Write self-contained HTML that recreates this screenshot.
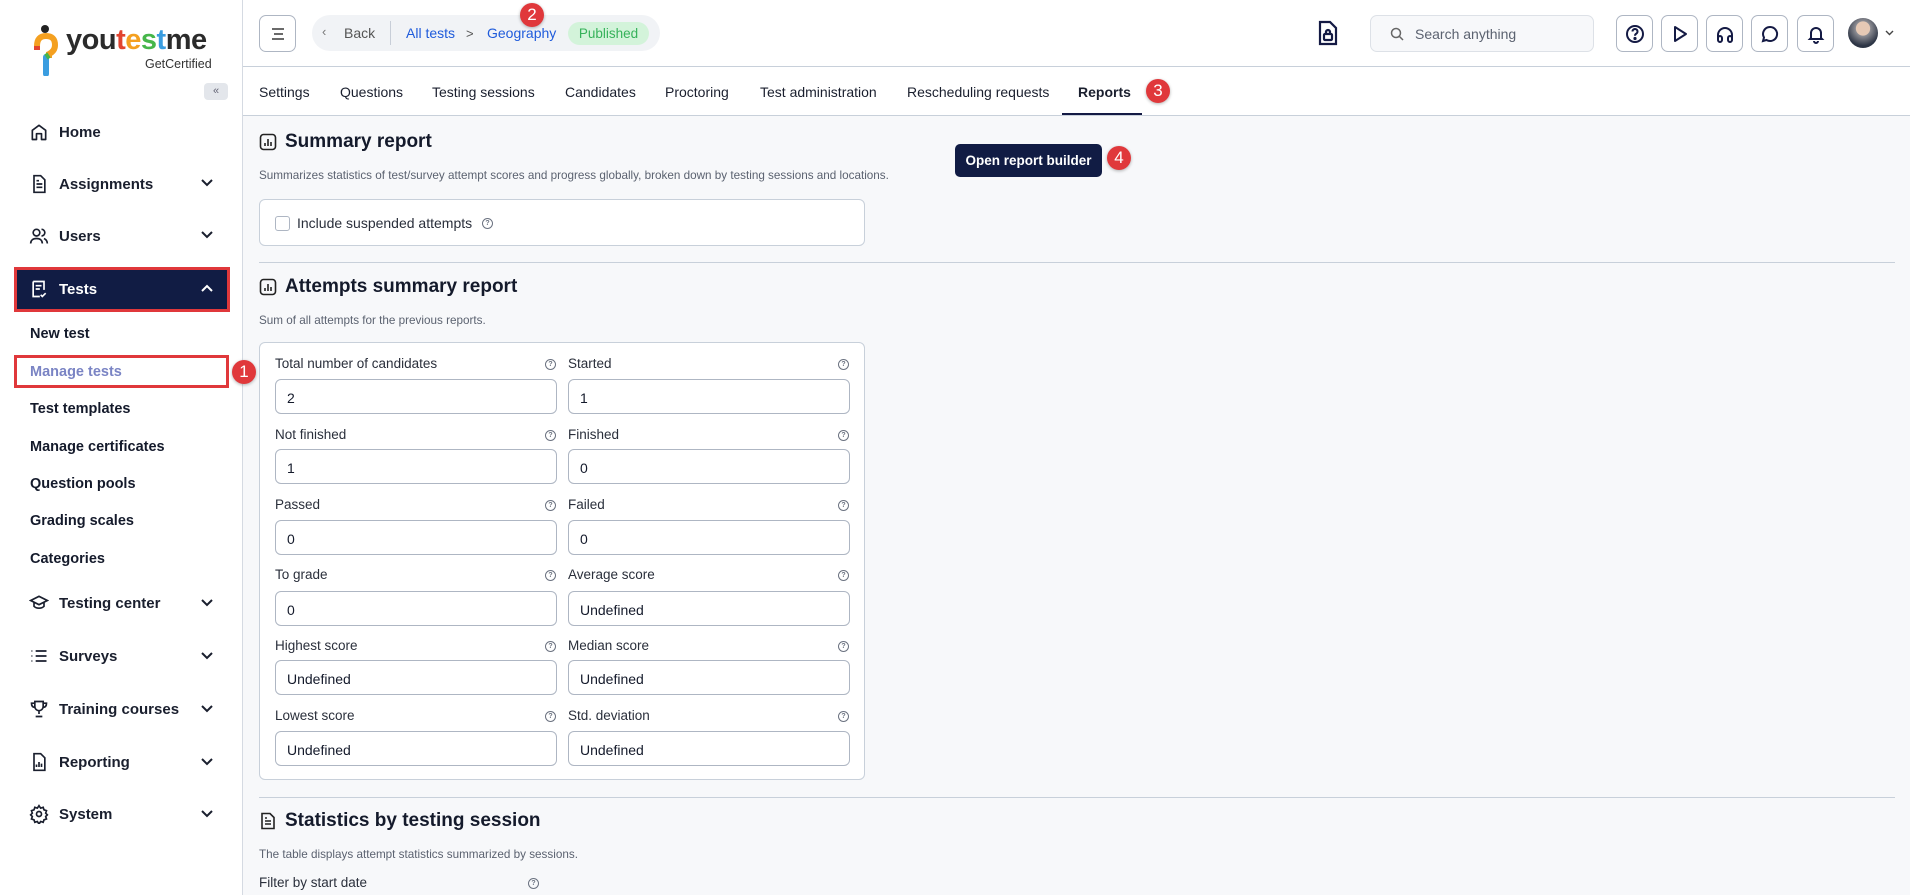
<!DOCTYPE html>
<html><head><meta charset="utf-8"><style>
*{box-sizing:border-box;margin:0;padding:0}
body{width:1910px;height:895px;overflow:hidden;font-family:"Liberation Sans",sans-serif;background:#f7f8fa;color:#141a2b;position:relative}
.a{position:absolute}
.sb{left:0;top:0;width:243px;height:895px;background:#fff;border-right:1px solid #d5dae2}
.nav{position:absolute;left:29px;font-size:15px;font-weight:bold;color:#1a1f2e;display:flex;align-items:center;height:24px}
.nav svg{margin-right:10px}
.chev{position:absolute;left:200px}
.sub{position:absolute;left:30px;font-size:14.5px;color:#141a2b;font-weight:bold}
.badge{position:absolute;width:24px;height:24px;border-radius:50%;background:#e0383b;color:#fff;font-size:17px;text-align:center;line-height:24px;box-shadow:0 1px 3px rgba(0,0,0,.3)}
.top{left:243px;top:0;width:1667px;height:67px;background:#fff;border-bottom:1px solid #c8d0da}
.tabs{left:243px;top:67px;width:1667px;height:49px;background:#fff;border-bottom:1px solid #c8d0da}
.tab{position:absolute;top:84px;font-size:14px;color:#1a1f2e}
.ib{position:absolute;top:15px;width:37px;height:37px;border:1px solid #aeb6c3;border-radius:7px;display:flex;align-items:center;justify-content:center;background:#fff}
h2{position:absolute;font-size:19px;font-weight:bold;color:#141a2b}
.desc{position:absolute;font-size:11.7px;color:#5b6270}
.box{position:absolute;background:#fff;border:1px solid #c8d0da;border-radius:6px}
.lbl{position:absolute;font-size:13.5px;color:#2a2f3b}
.inp{position:absolute;height:35px;border:1px solid #aeb6c3;border-radius:6px;background:#fff;font-size:14px;padding:10px 0 0 11px;color:#141a2b}
.hq{position:absolute;width:11px;height:11px;border:1px solid #6b7280;border-radius:50%;font-size:7px;text-align:center;line-height:9px;color:#6b7280;font-weight:bold}
.hr{position:absolute;left:259px;width:1636px;height:1px;background:#c8d0da}
</style></head><body>
<div class="a sb"></div>
<svg class="a" style="left:33px;top:24px" width="26" height="52" viewBox="0 0 26 52"><circle cx="12" cy="5" r="4" fill="#222"/><path d="M4 22 Q4 12 13 12 Q22 12 22 21 Q22 27 16 30 L16 34" stroke="#f4a020" stroke-width="6" fill="none"/><path d="M4 22 L4 26" stroke="#e2442f" stroke-width="6"/><path d="M13 33 L13 50" stroke="#3a9de0" stroke-width="6" stroke-linecap="round"/><path d="M13 33 L16 31" stroke="#46b64a" stroke-width="6"/></svg>
<div class="a" style="left:66px;top:24px;font-size:29px;font-weight:bold;letter-spacing:-0.5px;color:#2b2b2b">you<span style="color:#e2442f">t</span><span style="color:#f4a020">e</span><span style="color:#46b64a">s</span><span style="color:#3a9de0">t</span>me</div>
<div class="a" style="left:145px;top:57px;font-size:12.5px;color:#333">GetCertified</div>
<div class="a" style="left:204px;top:83px;width:24px;height:17px;background:#e3e6eb;border-radius:4px;font-size:11px;color:#667;text-align:center;line-height:16px">«</div>

<div class="nav" style="top:120px"><svg width="20" height="20" viewBox="0 0 24 24" fill="none" stroke="#1a1f2e" stroke-width="2"><path d="M4 21V10l8-6 8 6v11h-5v-7H9v7z" stroke-linejoin="round"/></svg>Home</div>
<div class="nav" style="top:172px"><svg width="20" height="20" viewBox="0 0 24 24" fill="none" stroke="#1a1f2e" stroke-width="2"><path d="M6 2h8l5 5v15H6z M9 12h7M9 16h7M9 8h3"/></svg>Assignments</div>
<div class="nav" style="top:224px"><svg width="20" height="20" viewBox="0 0 24 24" fill="none" stroke="#1a1f2e" stroke-width="2"><circle cx="9" cy="8" r="4"/><path d="M2 21c0-4 3-6 7-6s7 2 7 6M15 4a4 4 0 010 8M18 15c2 1 4 3 4 6"/></svg>Users</div>
<svg class="chev a" style="top:178px" width="14" height="10" viewBox="0 0 14 10"><path d="M2 2l5 5 5-5" stroke="#1a1f2e" stroke-width="2" fill="none"/></svg>
<svg class="chev a" style="top:230px" width="14" height="10" viewBox="0 0 14 10"><path d="M2 2l5 5 5-5" stroke="#1a1f2e" stroke-width="2" fill="none"/></svg>

<div class="a" style="left:14px;top:267px;width:216px;height:45px;background:#111c44;border:3px solid #e0383b"></div>
<div class="nav" style="top:277px;color:#fff"><svg width="20" height="20" viewBox="0 0 24 24" fill="none" stroke="#fff" stroke-width="2"><path d="M5 3h13v10M5 3v18h8M8 8h7M8 12h5M14 19l2 2 4-4"/></svg>Tests</div>
<svg class="chev a" style="top:283px" width="14" height="10" viewBox="0 0 14 10"><path d="M2 8l5-5 5 5" stroke="#fff" stroke-width="2" fill="none"/></svg>

<div class="sub" style="top:326px">New test</div>
<div class="a" style="left:14px;top:355px;width:215px;height:33px;border:3px solid #e0383b;background:#fff"></div>
<div class="sub" style="top:364px;color:#7a84c4">Manage tests</div>
<div class="badge" style="left:232px;top:360px">1</div>
<div class="sub" style="top:401px">Test templates</div>
<div class="sub" style="top:439px">Manage certificates</div>
<div class="sub" style="top:476px">Question pools</div>
<div class="sub" style="top:513px">Grading scales</div>
<div class="sub" style="top:551px">Categories</div>

<div class="nav" style="top:591px"><svg width="20" height="20" viewBox="0 0 24 24" fill="none" stroke="#1a1f2e" stroke-width="2"><path d="M2 9l10-5 10 5-10 5z M6 11v5c3 3 9 3 12 0v-5"/></svg>Testing center</div>
<div class="nav" style="top:644px"><svg width="20" height="20" viewBox="0 0 24 24" fill="none" stroke="#1a1f2e" stroke-width="2.2"><path d="M3 6h1M3 12h1M3 18h1M8 6h13M8 12h13M8 18h13"/></svg>Surveys</div>
<div class="nav" style="top:697px"><svg width="20" height="20" viewBox="0 0 24 24" fill="none" stroke="#1a1f2e" stroke-width="2"><path d="M7 3h10v6a5 5 0 01-10 0z M7 5H3c0 4 2 5 4 5M17 5h4c0 4-2 5-4 5M12 14v4M8 21h8"/></svg>Training courses</div>
<div class="nav" style="top:750px"><svg width="20" height="20" viewBox="0 0 24 24" fill="none" stroke="#1a1f2e" stroke-width="2"><path d="M6 2h8l5 5v15H6z M9 18v-3M12 18v-6M15 18v-4"/></svg>Reporting</div>
<div class="nav" style="top:802px"><svg width="20" height="20" viewBox="0 0 24 24" fill="none" stroke="#1a1f2e" stroke-width="2"><circle cx="12" cy="12" r="3"/><path d="M12 2l2 3 3-1 1 3 3 1-1 3 2 2-2 2 1 3-3 1-1 3-3-1-2 3-2-3-3 1-1-3-3-1 1-3-2-2 2-2-1-3 3-1 1-3 3 1z"/></svg>System</div>
<svg class="chev a" style="top:598px" width="14" height="10" viewBox="0 0 14 10"><path d="M2 2l5 5 5-5" stroke="#1a1f2e" stroke-width="2" fill="none"/></svg>
<svg class="chev a" style="top:651px" width="14" height="10" viewBox="0 0 14 10"><path d="M2 2l5 5 5-5" stroke="#1a1f2e" stroke-width="2" fill="none"/></svg>
<svg class="chev a" style="top:704px" width="14" height="10" viewBox="0 0 14 10"><path d="M2 2l5 5 5-5" stroke="#1a1f2e" stroke-width="2" fill="none"/></svg>
<svg class="chev a" style="top:757px" width="14" height="10" viewBox="0 0 14 10"><path d="M2 2l5 5 5-5" stroke="#1a1f2e" stroke-width="2" fill="none"/></svg>
<svg class="chev a" style="top:809px" width="14" height="10" viewBox="0 0 14 10"><path d="M2 2l5 5 5-5" stroke="#1a1f2e" stroke-width="2" fill="none"/></svg>

<div class="a top"></div>
<div class="a" style="left:259px;top:15px;width:37px;height:37px;border:1px solid #aeb6c3;border-radius:7px;background:#fff"><svg style="margin:10px 0 0 10px" width="16" height="16" viewBox="0 0 16 16"><path d="M2 3h12M4 8h9M2 13h12" stroke="#555" stroke-width="1.8"/></svg></div>
<div class="a" style="left:312px;top:15px;width:348px;height:36px;background:#f1f3f6;border-radius:18px"></div>
<div class="a" style="left:322px;top:24px;font-size:13px;color:#777">‹</div>
<div class="a" style="left:344px;top:25px;font-size:14px;color:#555">Back</div>
<div class="a" style="left:390px;top:21px;width:1px;height:24px;background:#c8ced8"></div>
<div class="a" style="left:406px;top:25px;font-size:14px;color:#1f5bdb">All tests</div>
<div class="a" style="left:466px;top:26px;font-size:13px;color:#555">&gt;</div>
<div class="a" style="left:487px;top:25px;font-size:14px;color:#1f5bdb">Geography</div>
<div class="a" style="left:568px;top:22px;width:81px;height:23px;background:#d3f3da;border-radius:12px;font-size:13.5px;color:#36b25a;text-align:center;line-height:23px">Published</div>
<div class="badge" style="left:520px;top:3px">2</div>

<svg class="a" style="left:1317px;top:20px" width="22" height="26" viewBox="0 0 22 26" fill="none" stroke="#141a44" stroke-width="2.2"><path d="M3 2h10l6 6v16H3z"/><rect x="7" y="14" width="8" height="6" rx="1"/><path d="M9 14v-2a2 2 0 014 0v2"/></svg>
<div class="a" style="left:1370px;top:15px;width:224px;height:37px;border:1px solid #dde1e7;border-radius:7px;background:#f7f8fa"></div>
<svg class="a" style="left:1390px;top:27px" width="14" height="14" viewBox="0 0 14 14" fill="none" stroke="#666" stroke-width="1.5"><circle cx="6" cy="6" r="4.5"/><path d="M9.5 9.5L13 13"/></svg>
<div class="a" style="left:1415px;top:26px;font-size:14px;color:#5b6270">Search anything</div>
<div class="ib" style="left:1616px"><svg width="20" height="20" viewBox="0 0 20 20" fill="none" stroke="#141a44" stroke-width="2"><circle cx="10" cy="10" r="8"/><path d="M7.5 7.5a2.5 2.5 0 114 2c-1 .6-1.5 1-1.5 2.2"/><circle cx="10" cy="14.5" r=".6" fill="#141a44"/></svg></div>
<div class="ib" style="left:1661px"><svg width="20" height="20" viewBox="0 0 20 20" fill="none" stroke="#141a44" stroke-width="2"><path d="M5 3l11 7-11 7z" stroke-linejoin="round"/></svg></div>
<div class="ib" style="left:1706px"><svg width="20" height="20" viewBox="0 0 20 20" fill="none" stroke="#141a44" stroke-width="2"><path d="M3 15v-4a7 7 0 0114 0v4"/><rect x="3" y="12" width="4" height="6" rx="2"/><rect x="13" y="12" width="4" height="6" rx="2"/></svg></div>
<div class="ib" style="left:1751px"><svg width="20" height="20" viewBox="0 0 20 20" fill="none" stroke="#141a44" stroke-width="2"><path d="M10 3a7 7 0 11-3.5 13L3 17l1-3.5A7 7 0 0110 3z"/></svg></div>
<div class="ib" style="left:1797px"><svg width="20" height="20" viewBox="0 0 20 20" fill="none" stroke="#141a44" stroke-width="2"><path d="M5 14V9a5 5 0 0110 0v5l1 1H4z M8 17a2 2 0 004 0"/></svg></div>
<div class="a" style="left:1848px;top:18px;width:30px;height:30px;border-radius:50%;background:radial-gradient(circle at 50% 35%,#e6c9b5 0 28%,#8e8e94 30%,#2d3545 70%)"></div>
<svg class="a" style="left:1885px;top:30px" width="9" height="6" viewBox="0 0 9 6"><path d="M1 1l3.5 3.5L8 1" stroke="#444" stroke-width="1.4" fill="none"/></svg>

<div class="a tabs"></div>
<div class="tab" style="left:259px">Settings</div>
<div class="tab" style="left:340px">Questions</div>
<div class="tab" style="left:432px">Testing sessions</div>
<div class="tab" style="left:565px">Candidates</div>
<div class="tab" style="left:665px">Proctoring</div>
<div class="tab" style="left:760px">Test administration</div>
<div class="tab" style="left:907px">Rescheduling requests</div>
<div class="tab" style="left:1078px;font-weight:bold">Reports</div>
<div class="a" style="left:1062px;top:113px;width:80px;height:2px;background:#141a44"></div>
<div class="badge" style="left:1146px;top:79px">3</div>

<svg class="a" style="left:259px;top:133px" width="18" height="18" viewBox="0 0 18 18" fill="none" stroke="#222" stroke-width="1.6"><rect x="1.5" y="1.5" width="15" height="15" rx="3"/><path d="M6 13v-3M9 13V6M12 13V9"/></svg>
<h2 style="left:285px;top:131px">Summary report</h2>
<div class="desc" style="left:259px;top:169px">Summarizes statistics of test/survey attempt scores and progress globally, broken down by testing sessions and locations.</div>
<div class="a" style="left:955px;top:144px;width:147px;height:33px;background:#111c44;border-radius:5px;color:#fff;font-size:13.5px;font-weight:bold;text-align:center;line-height:33px">Open report builder</div>
<div class="badge" style="left:1107px;top:146px">4</div>
<div class="box" style="left:259px;top:199px;width:606px;height:47px"></div>
<div class="a" style="left:275px;top:216px;width:15px;height:15px;border:1px solid #aeb6c3;border-radius:3px;background:#fff"></div>
<div class="lbl" style="left:297px;top:215px;font-size:14px">Include suspended attempts</div>
<div class="hq" style="left:482px;top:218px">?</div>
<div class="hr" style="top:262px"></div>

<svg class="a" style="left:259px;top:278px" width="18" height="18" viewBox="0 0 18 18" fill="none" stroke="#222" stroke-width="1.6"><rect x="1.5" y="1.5" width="15" height="15" rx="3"/><path d="M6 13v-3M9 13V6M12 13V9"/></svg>
<h2 style="left:285px;top:276px">Attempts summary report</h2>
<div class="desc" style="left:259px;top:314px">Sum of all attempts for the previous reports.</div>
<div class="box" style="left:259px;top:342px;width:606px;height:438px"></div>

<div class="lbl" style="left:275px;top:356px">Total number of candidates</div><div class="hq" style="left:545px;top:359px">?</div>
<div class="lbl" style="left:568px;top:356px">Started</div><div class="hq" style="left:838px;top:359px">?</div>
<div class="inp" style="left:275px;top:379px;width:282px">2</div><div class="inp" style="left:568px;top:379px;width:282px">1</div>

<div class="lbl" style="left:275px;top:427px">Not finished</div><div class="hq" style="left:545px;top:430px">?</div>
<div class="lbl" style="left:568px;top:427px">Finished</div><div class="hq" style="left:838px;top:430px">?</div>
<div class="inp" style="left:275px;top:449px;width:282px">1</div><div class="inp" style="left:568px;top:449px;width:282px">0</div>

<div class="lbl" style="left:275px;top:497px">Passed</div><div class="hq" style="left:545px;top:500px">?</div>
<div class="lbl" style="left:568px;top:497px">Failed</div><div class="hq" style="left:838px;top:500px">?</div>
<div class="inp" style="left:275px;top:520px;width:282px">0</div><div class="inp" style="left:568px;top:520px;width:282px">0</div>

<div class="lbl" style="left:275px;top:567px">To grade</div><div class="hq" style="left:545px;top:570px">?</div>
<div class="lbl" style="left:568px;top:567px">Average score</div><div class="hq" style="left:838px;top:570px">?</div>
<div class="inp" style="left:275px;top:591px;width:282px">0</div><div class="inp" style="left:568px;top:591px;width:282px">Undefined</div>

<div class="lbl" style="left:275px;top:638px">Highest score</div><div class="hq" style="left:545px;top:641px">?</div>
<div class="lbl" style="left:568px;top:638px">Median score</div><div class="hq" style="left:838px;top:641px">?</div>
<div class="inp" style="left:275px;top:660px;width:282px">Undefined</div><div class="inp" style="left:568px;top:660px;width:282px">Undefined</div>

<div class="lbl" style="left:275px;top:708px">Lowest score</div><div class="hq" style="left:545px;top:711px">?</div>
<div class="lbl" style="left:568px;top:708px">Std. deviation</div><div class="hq" style="left:838px;top:711px">?</div>
<div class="inp" style="left:275px;top:731px;width:282px">Undefined</div><div class="inp" style="left:568px;top:731px;width:282px">Undefined</div>

<div class="hr" style="top:797px"></div>
<svg class="a" style="left:259px;top:812px" width="18" height="18" viewBox="0 0 18 18" fill="none" stroke="#222" stroke-width="1.6"><path d="M3 1.5h8l4 4v11H3z M6 9h6M6 12h6M6 6h2"/></svg>
<h2 style="left:285px;top:810px">Statistics by testing session</h2>
<div class="desc" style="left:259px;top:848px">The table displays attempt statistics summarized by sessions.</div>
<div class="lbl" style="left:259px;top:875px">Filter by start date</div><div class="hq" style="left:528px;top:878px">?</div>
</body></html>
